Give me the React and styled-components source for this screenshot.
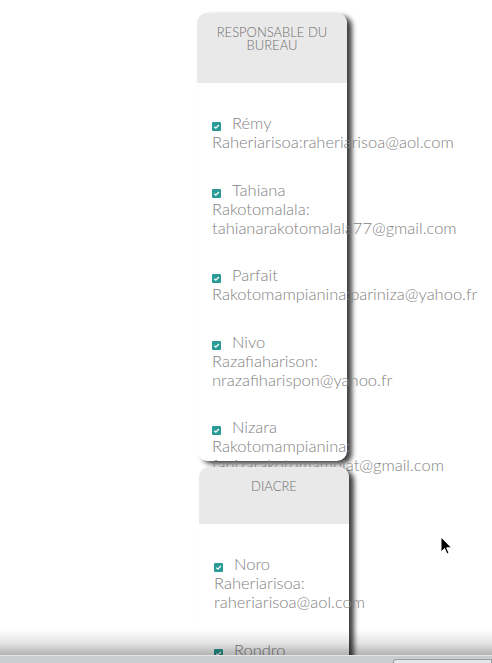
import React from "react";
import styled, { createGlobalStyle } from "styled-components";

const GlobalStyle = createGlobalStyle`
  html, body {
    margin: 0;
    padding: 0;
    background: #ffffff;
    font-family: "Lato", "Open Sans", sans-serif;
  }
`;

const Page = styled.div`
  padding-top: 13px;
  display: flex;
  flex-direction: column;
  gap: 6px;
  height: 663px;
  overflow: hidden;
`;

const Card = styled.section`
  position: relative;
  width: 150px;
  height: 448px;
  flex-shrink: 0;
  margin-left: ${({ offset }) => `${offset}px`};
  background: #ffffff;
  border-radius: 10px;
  box-shadow: 5px 3px 5px rgba(0, 0, 0, 0.75);
`;

const Header = styled.header`
  background: #e9e9e9;
  border-radius: 10px 10px 0 0;
  padding: 13px 6px 31px;
  text-align: center;
`;

const Title = styled.h2`
  margin: 0;
  font-size: 13px;
  line-height: 13px;
  font-weight: 300;
  color: #6f6f6f;
  text-transform: uppercase;
`;

const List = styled.ul`
  list-style: none;
  margin: 0;
  padding: 31px 15px 0;
`;

const Item = styled.li`
  font-size: 16.5px;
  line-height: 19px;
  font-weight: 300;
  color: #828282;
  margin-bottom: 28.5px;
`;

const Check = styled.span`
  display: inline-block;
  width: 9px;
  height: 9px;
  margin-right: 11px;
  vertical-align: -2px;
  background: #2b9b98;
  border-radius: 1px;

  svg {
    display: block;
  }
`;

const Footer = styled.div`
  position: fixed;
  left: 0;
  right: 0;
  bottom: 0;
  height: 33px;
  display: flex;
  flex-direction: column;
  pointer-events: none;
`;

const Fade = styled.div`
  flex: 1;
  background: linear-gradient(
    to bottom,
    rgba(0, 0, 0, 0) 0%,
    rgba(0, 0, 0, 0.1) 50%,
    rgba(0, 0, 0, 0.3) 100%
  );
  border-bottom: 1px solid #e6e6e6;
`;

const Bar = styled.div`
  height: 7px;
  background: #c9cdcd;
  display: flex;
  justify-content: flex-end;
  align-items: flex-end;
`;

const Thumb = styled.div`
  width: 97px;
  height: 3px;
  border: 1px solid #9a9e9e;
  border-bottom: none;
  border-radius: 3px 0 0 0;
  background: #e4e7e7;
`;

const Cursor = styled.svg`
  position: fixed;
  left: 440px;
  top: 536px;
  pointer-events: none;
`;

const cards = [
  {
    title: "Responsable du bureau",
    offset: 197,
    people: [
      ["Rémy", "Raheriarisoa:raheriarisoa@aol.com"],
      ["Tahiana", "Rakotomalala: tahianarakotomalala77@gmail.com"],
      ["Parfait", "Rakotomampianina:pariniza@yahoo.fr"],
      ["Nivo", "Razafiaharison: nrazafiharispon@yahoo.fr"],
      ["Nizara", "Rakotomampianina: fanizarakotomampiat@gmail.com"],
    ],
  },
  {
    title: "Diacre",
    offset: 199,
    people: [
      ["Noro", "Raheriarisoa: raheriarisoa@aol.com"],
      ["Rondro", "Rakotomalala: rondro@gmail.com"],
    ],
  },
];

function CheckMark() {
  return (
    <Check>
      <svg width="9" height="9" viewBox="0 0 9 9">
        <path
          d="M2.2 4.6 L3.8 6.1 L6.9 3"
          fill="none"
          stroke="#ffffff"
          strokeWidth="1.3"
        />
      </svg>
    </Check>
  );
}

export default function App() {
  return (
    <>
      <GlobalStyle />
      <Page>
        {cards.map((card) => (
          <Card key={card.title} offset={card.offset}>
            <Header>
              <Title>{card.title}</Title>
            </Header>
            <List>
              {card.people.map(([first, rest]) => (
                <Item key={first}>
                  <CheckMark />
                  {first} {rest}
                </Item>
              ))}
            </List>
          </Card>
        ))}
      </Page>
      <Cursor width="14" height="20" viewBox="0 0 14 20">
        <path
          d="M1 1 L1 16 L4.5 12.5 L7 18 L9 17 L6.7 11.8 L11.5 11.8 Z"
          fill="#000000"
          stroke="#ffffff"
          strokeWidth="1"
        />
      </Cursor>
      <Footer>
        <Fade />
        <Bar>
          <Thumb />
        </Bar>
      </Footer>
    </>
  );
}
